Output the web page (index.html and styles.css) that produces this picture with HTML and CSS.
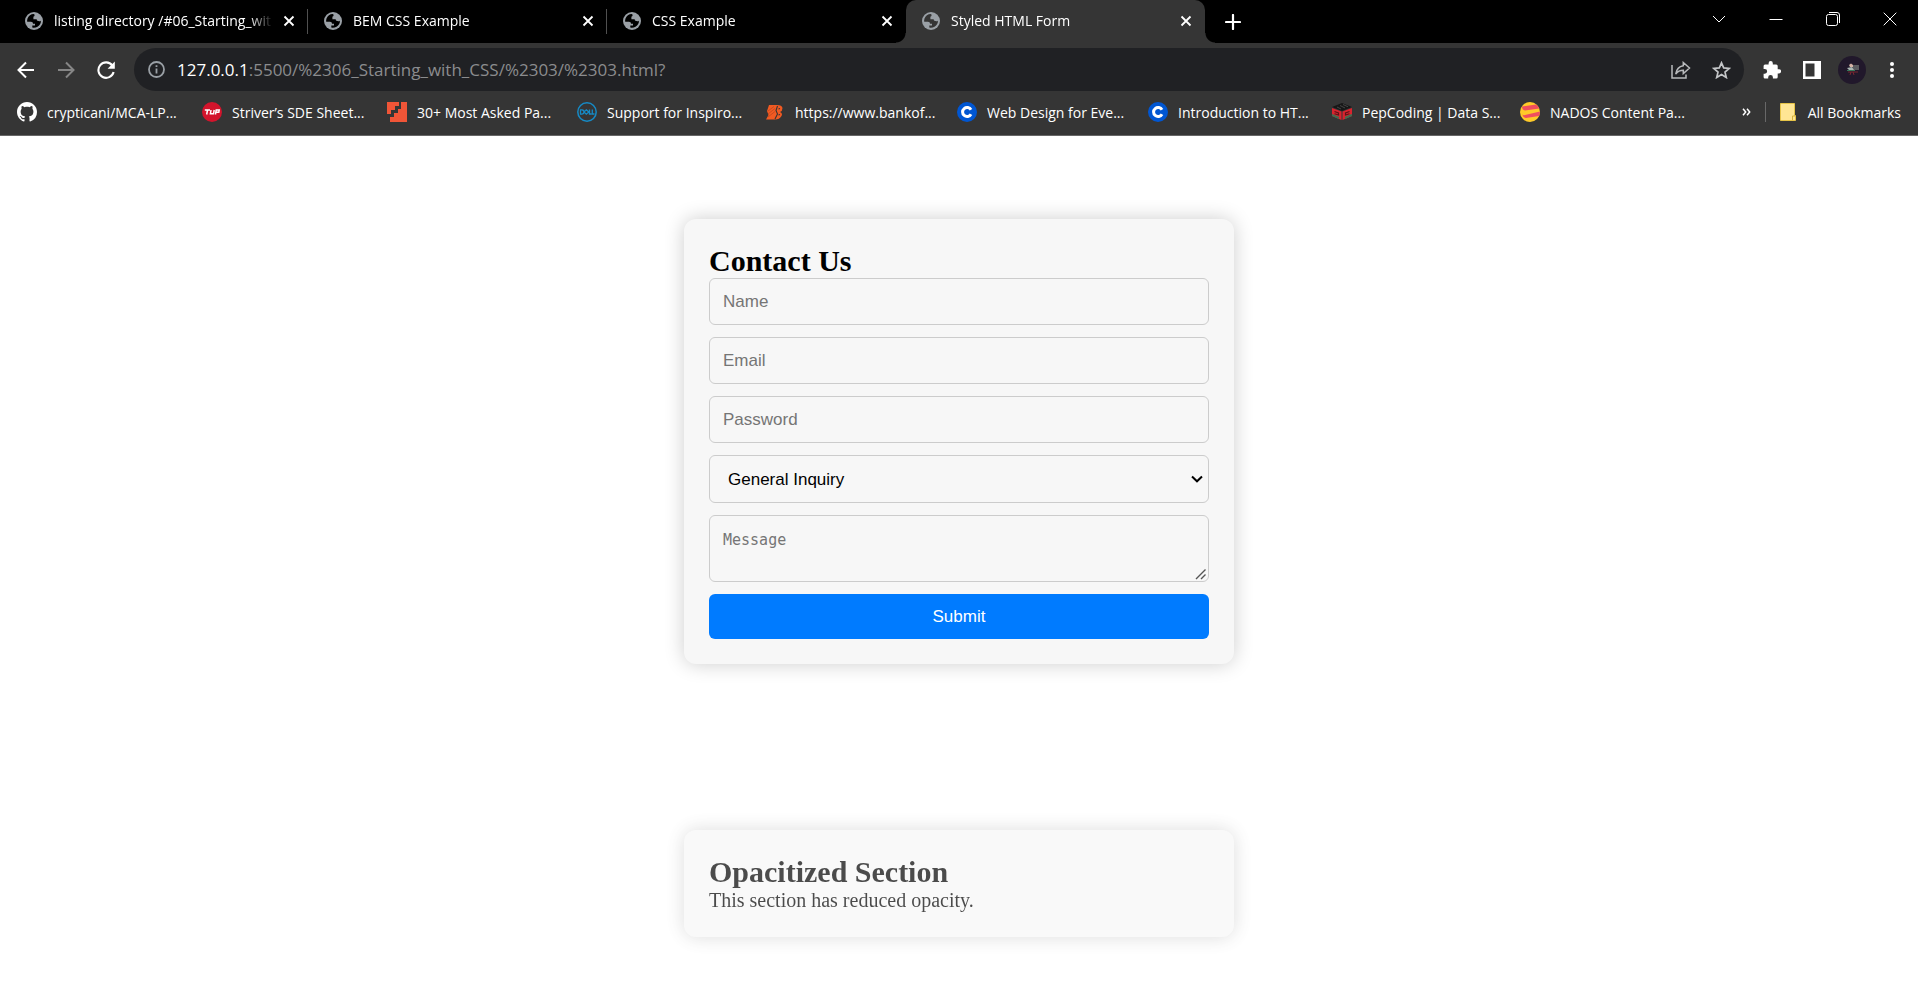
FILE: index.html
```html
<!DOCTYPE html>
<html lang="en">
<head>
<meta charset="utf-8">
<meta name="viewport" content="width=device-width, initial-scale=1">
<title>Styled HTML Form</title>
<link rel="stylesheet" href="styles.css">
</head>
<body>
<svg class="defs" aria-hidden="true">
  <symbol id="globe" viewBox="0 0 18 18">
    <circle cx="9" cy="9" r="9" fill="#9aa0a6"/>
    <path class="globe-land" d="M8.600 2.100C6 2.200 3.400 3.900 2.500 6.500C2.100 7.800 2 8.800 2.200 9.700H5.900C7.400 9.700 8 10.500 8 11.700H10V13.400H7.300V15.600C9.900 16.500 13.700 15 15.200 12.100C15.800 10.900 16 9.800 15.900 8.700C15 9.200 14.200 9.300 13.200 9.100C12.100 8.800 11.700 8.100 11.700 7.200H8.400V5.300C8.400 4.600 8.900 4.200 9.500 4.100V2.500Z"/>
  </symbol>
  <symbol id="close" viewBox="0 0 12 12"><path d="M1.500 1.500L10.500 10.500M10.500 1.500L1.500 10.500" fill="none" stroke="#fff" stroke-width="1.800"/></symbol>
  <symbol id="coursera" viewBox="0 0 20 20"><circle cx="10" cy="10" r="10" fill="#0056d2"/><path d="M14 7.800A4.500 4.500 0 1 0 14 12.200" fill="none" stroke="#fff" stroke-width="3"/></symbol>
</svg>

<header class="browser">
  <div class="tabstrip">
    <nav class="tabs" aria-label="Tabs">
      <div class="tab"><svg class="favicon"><use href="#globe"/></svg><span class="tab-title">listing directory /#06_Starting_wit</span><button class="tab-close" aria-label="Close tab"><svg><use href="#close"/></svg></button></div>
      <div class="tab"><svg class="favicon"><use href="#globe"/></svg><span class="tab-title">BEM CSS Example</span><button class="tab-close" aria-label="Close tab"><svg><use href="#close"/></svg></button></div>
      <div class="tab tab-last"><svg class="favicon"><use href="#globe"/></svg><span class="tab-title">CSS Example</span><button class="tab-close" aria-label="Close tab"><svg><use href="#close"/></svg></button></div>
      <div class="tab tab-active"><svg class="favicon"><use href="#globe"/></svg><span class="tab-title">Styled HTML Form</span><button class="tab-close" aria-label="Close tab"><svg><use href="#close"/></svg></button></div>
      <button class="new-tab" aria-label="New tab"><svg width="16" height="16" viewBox="0 0 16 16"><path d="M8 1V15M1 8H15" stroke="#fff" stroke-width="2.200" stroke-linecap="round"/></svg></button>
    </nav>
    <div class="window-controls">
      <button aria-label="Search tabs"><svg width="14" height="14" viewBox="0 0 14 14"><path d="M1 4L7 10L13 4"/></svg></button>
      <button aria-label="Minimize"><svg width="14" height="14" viewBox="0 0 14 14"><path d="M.5 7.500H13.500"/></svg></button>
      <button aria-label="Restore"><svg width="14" height="14" viewBox="0 0 14 14"><rect x=".5" y="2.500" width="11" height="11" rx="2"/><path d="M3 .5H11Q13.500 .5 13.500 3V11"/></svg></button>
      <button aria-label="Close window"><svg width="14" height="14" viewBox="0 0 14 14"><path d="M.7 .7L13.300 13.300M13.300 .7L.7 13.300"/></svg></button>
    </div>
  </div>

  <div class="toolbar">
    <div class="nav-buttons">
      <button aria-label="Back"><svg width="18" height="18" viewBox="0 0 18 18"><path d="M17 9H2M9 1.500L1.500 9L9 16.500" fill="none" stroke="#fff" stroke-width="2"/></svg></button>
      <button aria-label="Forward"><svg width="18" height="18" viewBox="0 0 18 18"><path d="M1 9H16M9 1.500L16.500 9L9 16.500" fill="none" stroke="#868686" stroke-width="2"/></svg></button>
      <button aria-label="Reload"><svg width="18" height="18" viewBox="0 0 18 18"><path d="M15.300 4.500A7.700 7.700 0 1 0 16.600 11" fill="none" stroke="#fff" stroke-width="2.100"/><path d="M17.800 .5V7.700H10.600Z" fill="#fff"/></svg></button>
    </div>
    <div class="omnibox">
      <svg class="info" width="17" height="17" viewBox="0 0 17 17"><circle cx="8.500" cy="8.500" r="7.500" fill="none" stroke="#9aa0a6" stroke-width="1.800"/><path d="M8.500 7.500V12.600M8.500 4.300V6.100" stroke="#9aa0a6" stroke-width="1.800"/></svg>
      <span class="url"><span class="host">127.0.0.1</span>:5500/%2306_Starting_with_CSS/%2303/%2303.html?</span>
      <button aria-label="Share"><svg width="20" height="18" viewBox="0 0 20 18"><path d="M1 4V17H15V13.500M12.300 1.500L18.500 7L12.300 12.500V9.300C9 9.300 6.800 10.200 4.700 13C5.400 8.500 8 5.400 12.300 4.700Z" fill="none" stroke="#b8babc" stroke-width="1.500"/></svg></button>
      <button aria-label="Bookmark this page"><svg width="19" height="18" viewBox="0 0 19 18"><path d="M9.500 1.800L11.700 6.900L17.200 7.400L13 11.100L14.300 16.500L9.500 13.600L4.700 16.500L6 11.100L1.800 7.400L7.300 6.900Z" fill="none" stroke="#c4c6c8" stroke-width="1.700"/></svg></button>
    </div>
    <div class="actions">
      <button aria-label="Extensions"><svg width="18" height="18" viewBox="0 0 18 18"><path d="M16 8.200H14.700V5Q14.700 3.500 13.200 3.500H9.800V2.200A2.100 2.100 0 0 0 5.600 2.200V3.500H2Q.6 3.500 .6 5V8H1.800A2.300 2.300 0 0 1 1.800 12.700H.6V16Q.6 17.500 2 17.500H5.200V16.300A2.300 2.300 0 0 1 9.900 16.300V17.500H13.200Q14.700 17.500 14.700 16V12.400H16A2.100 2.100 0 0 0 16 8.200Z" fill="#fff"/></svg></button>
      <button aria-label="Side panel"><svg width="18" height="18" viewBox="0 0 18 18"><path d="M0 0H18V18H0ZM2.500 2.500V15.500H11.500V2.500Z" fill="#fff" fill-rule="evenodd"/></svg></button>
      <button aria-label="Profile"><svg width="28" height="28" viewBox="0 0 28 28"><circle cx="14" cy="14" r="14" fill="#21182b"/><path d="M14 9H21V14H15Z" fill="#5b5c60"/><path d="M11 9L13 7.500L15 9V11H12Z" fill="#d5b4a6"/><path d="M9 12L14 11L16 14L11 14Z" fill="#a9b7b3"/><path d="M9 14H17V15H9Z" fill="#37795c"/><path d="M10 16H20M13 16L12 19M15 16L16 19" stroke="#7a2630" stroke-width="1"/></svg></button>
      <button aria-label="Menu"><svg width="6" height="18" viewBox="0 0 6 18"><g fill="#fff"><circle cx="3" cy="3" r="2"/><circle cx="3" cy="9" r="2"/><circle cx="3" cy="15" r="2"/></g></svg></button>
    </div>
  </div>

  <nav class="bookmarks" aria-label="Bookmarks">
    <div class="bookmark-list">
      <a href="#"><svg viewBox="0 0 16 16"><path fill="#fff" d="M8 0C3.580 0 0 3.580 0 8c0 3.540 2.290 6.530 5.470 7.590.4.070.55-.17.55-.38 0-.19-.01-.82-.01-1.490-2.010.37-2.530-.49-2.690-.94-.09-.23-.48-.94-.82-1.130-.28-.15-.68-.52-.01-.53.63-.01 1.080.58 1.230.82.72 1.210 1.870.87 2.330.66.07-.52.28-.87.51-1.070-1.780-.2-3.640-.89-3.640-3.950 0-.87.31-1.590.82-2.150-.08-.2-.36-1.020.08-2.120 0 0 .67-.21 2.200.82.64-.18 1.320-.27 2-.27s1.360.09 2 .27c1.530-1.040 2.200-.82 2.200-.82.44 1.100.16 1.920.08 2.120.51.56.82 1.270.82 2.150 0 3.070-1.870 3.750-3.650 3.950.29.25.54.73.54 1.480 0 1.070-.01 1.930-.01 2.200 0 .21.15.46.55.38A8 8 0 0 0 16 8c0-4.420-3.580-8-8-8z"/></svg><span>crypticani/MCA-LP...</span></a>
      <a href="#"><svg viewBox="0 0 20 20"><circle cx="10" cy="10" r="10" fill="#d3142c"/><path d="M2.800 8H8M5.500 8L4.700 12.500M9 8L8.400 11.800H11.500L12.200 8M13.500 12.500L14.200 8H17.200L16.800 10.300H14" fill="none" stroke="#fff" stroke-width="1.500"/></svg><span>Striver’s SDE Sheet...</span></a>
      <a href="#"><svg viewBox="0 0 20 20"><path d="M0 0H12V4H8V8H4V12H0Z" fill="#f05537"/><path d="M14 0H20V20H3V15H7V11H11V7H14Z" fill="#f05537"/></svg><span>30+ Most Asked Pa...</span></a>
      <a href="#"><svg viewBox="0 0 20 20"><circle cx="10" cy="10" r="9.200" fill="none" stroke="#168ac5" stroke-width="1.500"/><path d="M3.500 7.800V12.200H5Q7 12 7 10Q7 8 5 7.800ZM9.300 7.800L11.800 10L9.300 12.200L7 10ZM12.500 7.500V12H14.500M15.300 7.500V12H17.500" fill="none" stroke="#168ac5" stroke-width="1.300"/></svg><span>Support for Inspiro...</span></a>
      <a href="#"><svg viewBox="0 0 20 20"><path d="M4 3H12Q17 3 17.500 6Q17.500 9 15 10Q18 11.500 16.500 14Q14.500 17.500 10 17.500H1L3.500 13L2 9Z" fill="#f15a22"/><path d="M12.500 4L11 8.500L12.500 12L10 17M13.500 7L15 6.500M13.500 13L15 12.500" fill="none" stroke="#353535" stroke-width="1.100"/><path d="M3 9L9 4.500M3 12L10 6.500M3 15L10 9.500" stroke="#b8451f" stroke-width=".7"/></svg><span>https://www.bankof...</span></a>
      <a href="#"><svg><use href="#coursera"/></svg><span>Web Design for Eve...</span></a>
      <a href="#"><svg><use href="#coursera"/></svg><span>Introduction to HT...</span></a>
      <a href="#"><svg viewBox="0 0 20 20"><path d="M10 1L20 5L10 9L0 5Z" fill="#171717"/><path d="M5 5L9 7M8 3.500L13 6M11 2.500L16 4.800" stroke="#454545"/><path d="M0 6L9.500 9.500V18L0 14Z" fill="#d9232e"/><path d="M20 6L10.500 9.500V18L20 14Z" fill="#d9232e"/><path d="M2.500 9.500L6.500 11V13L2.500 11.700M17.500 9.500L13.500 11V13L17.500 11.700" fill="none" stroke="#5c1418" stroke-width="1.200"/><path d="M0 13L7 16M20 13L13 16" stroke="#3f6d50" stroke-width="2"/></svg><span>PepCoding | Data S...</span></a>
      <a href="#"><svg viewBox="0 0 20 20"><circle cx="10" cy="10" r="10" fill="#ffca28"/><path d="M2 4.500L16 2.500Q18.500 4.500 19.300 6.500L5 8.500Q2 8 2 4.500ZM2.500 12Q3 14 5 13L20 9.500Q20 12 19 14L6 16Q2.500 15.500 2.500 12Z" fill="#f04e5e"/></svg><span>NADOS Content Pa...</span></a>
    </div>
    <div class="bookmark-end">
      <button class="more" aria-label="More bookmarks"><svg width="9" height="8" viewBox="0 0 9 8"><path d="M1 .8L3.700 4L1 7.200M5 .8L7.700 4L5 7.200" fill="none" stroke="#fff" stroke-width="1.500"/></svg></button>
      <span class="divider"></span>
      <a href="#"><svg class="folder" viewBox="0 0 16 18"><path d="M.5 .5H14.500V12.500H15.500V17.500H.5Z" fill="#ffe694" stroke="#e6c447"/><path d="M12.500 17V13H15" fill="none" stroke="#d6b23c"/></svg><span>All Bookmarks</span></a>
    </div>
  </nav>
</header>

<main class="page">
  <section class="card">
    <h2>Contact Us</h2>
    <form class="contact-form">
      <input type="text" placeholder="Name" aria-label="Name">
      <input type="email" placeholder="Email" aria-label="Email">
      <input type="password" placeholder="Password" aria-label="Password">
      <select aria-label="Inquiry type"><option>General Inquiry</option></select>
      <textarea placeholder="Message" aria-label="Message" rows="2"></textarea>
      <button type="submit">Submit</button>
    </form>
  </section>
  <section class="card card-faded">
    <h2>Opacitized Section</h2>
    <p>This section has reduced opacity.</p>
  </section>
</main>
</body>
</html>
```

FILE: styles.css
```css
* {
  box-sizing: border-box;
  margin: 0;
  padding: 0;
}

body {
  background: #fff;
  font-family: "Liberation Serif", serif;
  font-size: 20px;
}

svg {
  display: block;
  flex: none;
}

.defs {
  position: absolute;
  width: 0;
  height: 0;
}

/* Browser chrome */
.browser {
  background: #353535;
  border-bottom: 1px solid #666;
  color: #fff;
  font-family: "Open Sans", sans-serif;
  font-size: 14px;
}

.browser button {
  display: flex;
  align-items: center;
  justify-content: center;
  background: none;
  border: 0;
}

.browser a {
  display: flex;
  align-items: center;
  color: inherit;
  text-decoration: none;
}

.tabstrip {
  display: flex;
  justify-content: space-between;
  height: 43px;
  background: #000;
}

.tabs {
  display: flex;
  padding-left: 9px;
}

.tab {
  position: relative;
  display: flex;
  align-items: center;
  width: 299px;
  padding: 0 11px 2px 16px;
}

.tab::after {
  content: "";
  position: absolute;
  right: 0;
  top: 9px;
  width: 1px;
  height: 25px;
  background: #505050;
}

.tab-last::after {
  display: none;
}

.tab-active {
  background: #353535;
  border-radius: 10px 10px 0 0;
}

.tab-active::before,
.tab-active::after {
  content: "";
  position: absolute;
  top: auto;
  bottom: 0;
  width: 10px;
  height: 10px;
}

.tab-active::before {
  left: -10px;
  background: radial-gradient(circle at 0 0, #000 9px, #353535 10px);
}

.tab-active::after {
  right: -10px;
  background: radial-gradient(circle at 100% 0, #000 9px, #353535 10px);
}

.favicon {
  width: 18px;
  height: 18px;
  fill: #000;
}

.tab-active .favicon {
  fill: #353535;
}

.tab-title {
  flex: 1;
  margin-left: 11px;
  overflow: hidden;
  white-space: nowrap;
  mask-image: linear-gradient(to right, #000 calc(100% - 24px), transparent);
}

.tab-close {
  width: 16px;
  height: 16px;
  margin-left: 8px;
}

.tab-close svg {
  width: 12px;
  height: 12px;
}

.new-tab {
  width: 56px;
}

.window-controls {
  display: flex;
  padding-bottom: 6px;
}

.window-controls button {
  width: 57px;
}

.window-controls path,
.window-controls rect {
  fill: none;
  stroke: #fff;
}

.toolbar {
  display: flex;
  align-items: center;
  padding: 5px 6px 0;
}

.nav-buttons {
  display: flex;
  width: 128px;
}

.nav-buttons button {
  width: 40px;
}

.omnibox {
  display: flex;
  flex: 1;
  align-items: center;
  height: 43px;
  padding: 0 3px 0 14px;
  background: #202124;
  border-radius: 22px;
}

.url {
  flex: 1;
  margin-left: 12px;
  color: #8b8c8e;
  font-size: 17px;
}

.host {
  color: #fff;
}

.omnibox button {
  width: 40px;
}

.actions {
  display: flex;
  align-items: center;
  padding-left: 8px;
}

.actions button {
  width: 40px;
}

.bookmarks {
  display: flex;
  justify-content: space-between;
  height: 44px;
  padding: 0 17px 2px;
}

.bookmark-list {
  display: grid;
  grid-template-columns: 185px 185px 190px 188px 192px 191px 184px 188px 188px;
  align-items: center;
}

.bookmarks a {
  gap: 10px;
  white-space: nowrap;
}

.bookmark-list svg {
  width: 20px;
  height: 20px;
}

.bookmark-end {
  display: flex;
  align-items: center;
  gap: 14px;
}

.divider {
  width: 1px;
  height: 20px;
  background: #686868;
}

.bookmark-end a {
  gap: 12px;
}

.bookmark-end .folder {
  width: 16px;
  height: 18px;
}

/* Page content */
.page {
  display: flex;
  flex-direction: column;
  align-items: center;
  gap: 166px;
  padding: 83px 16px 40px;
}

.card {
  width: 100%;
  max-width: 550px;
  padding: 25px;
  background: #f7f7f7;
  border-radius: 12px;
  box-shadow: 0 0 20px rgba(0, 0, 0, 0.2);
}

.card-faded {
  opacity: 0.7;
}

.card h2 {
  font-size: 30px;
  line-height: 34px;
}

.card p {
  line-height: 23px;
}

.contact-form {
  display: flex;
  flex-direction: column;
  gap: 12px;
}

.contact-form input,
.contact-form select,
.contact-form textarea {
  height: 47px;
  padding: 12px 13px;
  background-color: transparent;
  border: 1px solid #ccc;
  border-radius: 6px;
  color: #000;
  font-family: "Liberation Sans", sans-serif;
  font-size: 17px;
}

.contact-form ::placeholder {
  color: #757575;
}

.contact-form select {
  height: 48px;
  padding: 0 18px;
  appearance: none;
  background-image: url("data:image/svg+xml,%3Csvg xmlns='http://www.w3.org/2000/svg' width='12' height='8' viewBox='0 0 12 8'%3E%3Cpath d='M1 1.500L6 6.300L11 1.500' fill='none' stroke='%23000' stroke-width='2'/%3E%3C/svg%3E");
  background-repeat: no-repeat;
  background-position: right 5px center;
}

.contact-form textarea {
  height: 67px;
  padding-top: 15px;
  font-family: "DejaVu Sans Mono", monospace;
  font-size: 15px;
  resize: vertical;
}

.contact-form textarea::-webkit-resizer {
  background: url("data:image/svg+xml,%3Csvg xmlns='http://www.w3.org/2000/svg' width='15' height='15' viewBox='0 0 15 15'%3E%3Cpath d='M3 13L12.500 3.500M8 13L12.500 8.500' fill='none' stroke='%23555' stroke-width='1.400'/%3E%3C/svg%3E") no-repeat right bottom;
}

.contact-form button {
  height: 45px;
  background: #007bff;
  border: 0;
  border-radius: 6px;
  color: #fff;
  font-family: "Liberation Sans", sans-serif;
  font-size: 17px;
}
```
